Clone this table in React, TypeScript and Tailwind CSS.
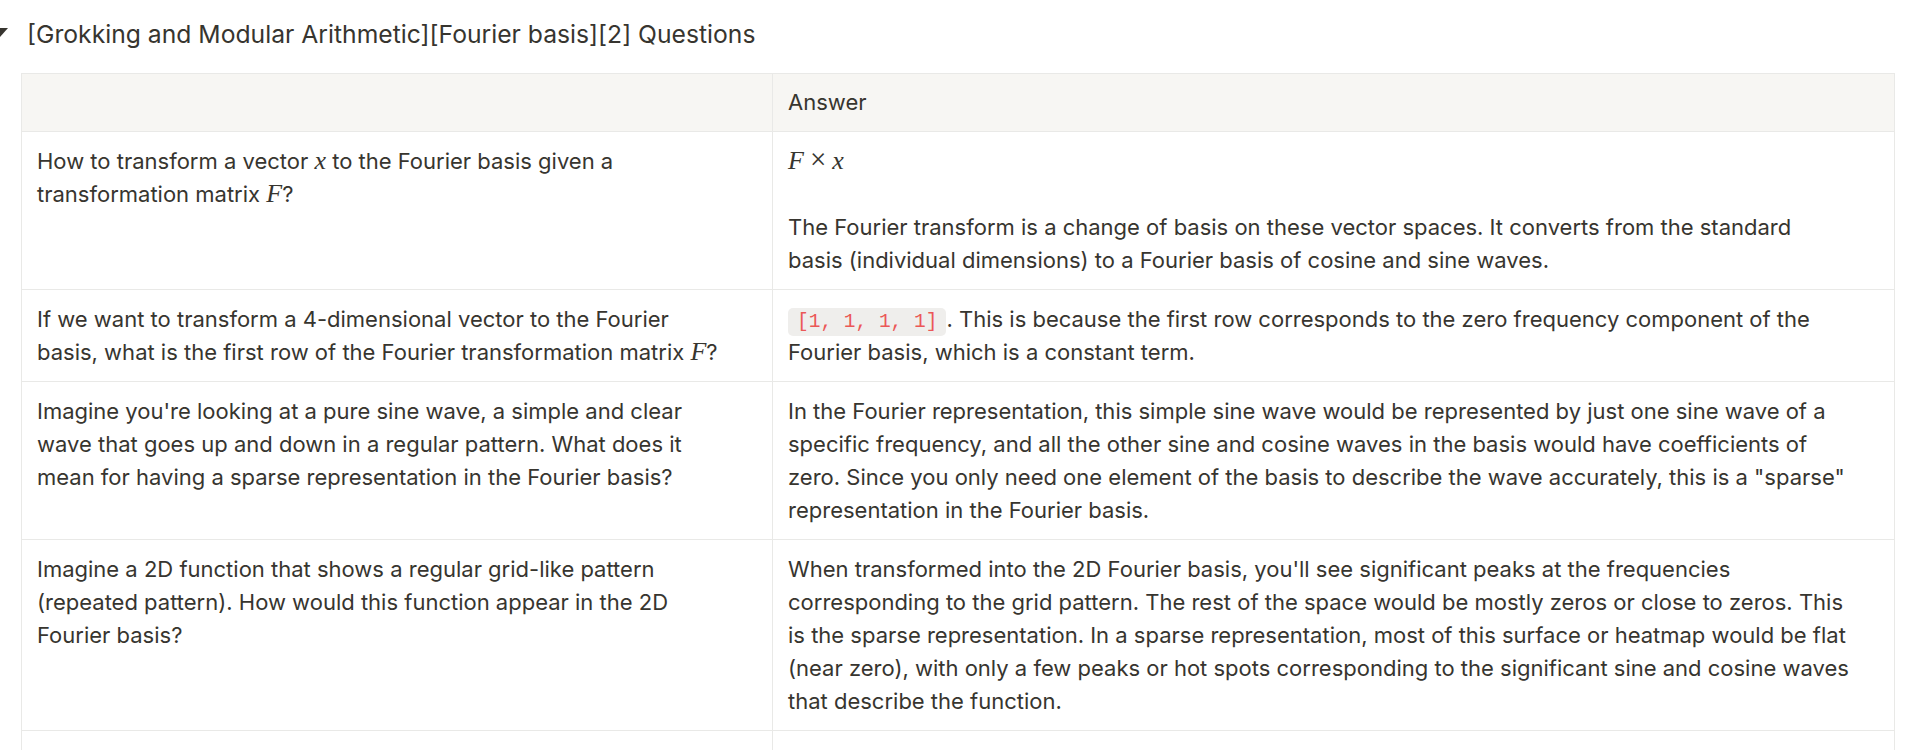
import type { ReactNode } from "react";

const TEXT = "text-[#37352f]";

function M({ children }: { children: ReactNode }) {
  return (
    <span className="font-['Liberation_Serif',serif] text-[26px] italic leading-none">
      {children}
    </span>
  );
}

function Code({ children }: { children: ReactNode }) {
  return (
    <span className="rounded-[5px] bg-[#efeeec] px-[9px] py-[3px] font-['Liberation_Mono',monospace] text-[19.5px] leading-none text-[#eb5757]">
      {children}
    </span>
  );
}

type Row = { q: ReactNode[]; a: ReactNode[] };

const ROWS: Row[] = [
  {
    q: [
      <>
        How to transform a vector <M>x</M> to the Fourier basis given a
      </>,
      <>
        transformation matrix <M>F</M>?
      </>,
    ],
    a: [
      <span className="font-['Liberation_Serif',serif] text-[26px] leading-none">
        <i>F</i>
        <span className="mx-[6px] text-[29px]">×</span>
        <i>x</i>
      </span>,
      <>&nbsp;</>,
      <>
        The Fourier transform is a change of basis on these vector spaces. It
        converts from the standard
      </>,
      <>
        basis (individual dimensions) to a Fourier basis of cosine and sine
        waves.
      </>,
    ],
  },
  {
    q: [
      <>If we want to transform a 4-dimensional vector to the Fourier</>,
      <>
        basis, what is the first row of the Fourier transformation matrix{" "}
        <M>F</M>?
      </>,
    ],
    a: [
      <>
        <Code>[1, 1, 1, 1]</Code>. This is because the first row corresponds to
        the zero frequency component of the
      </>,
      <>Fourier basis, which is a constant term.</>,
    ],
  },
  {
    q: [
      <>Imagine you're looking at a pure sine wave, a simple and clear</>,
      <>wave that goes up and down in a regular pattern. What does it</>,
      <>mean for having a sparse representation in the Fourier basis?</>,
    ],
    a: [
      <>
        In the Fourier representation, this simple sine wave would be
        represented by just one sine wave of a
      </>,
      <>
        specific frequency, and all the other sine and cosine waves in the
        basis would have coefficients of
      </>,
      <>
        zero. Since you only need one element of the basis to describe the wave
        accurately, this is a "sparse"
      </>,
      <>representation in the Fourier basis.</>,
    ],
  },
  {
    q: [
      <>Imagine a 2D function that shows a regular grid-like pattern</>,
      <>(repeated pattern). How would this function appear in the 2D</>,
      <>Fourier basis?</>,
    ],
    a: [
      <>
        When transformed into the 2D Fourier basis, you'll see significant
        peaks at the frequencies
      </>,
      <>
        corresponding to the grid pattern. The rest of the space would be
        mostly zeros or close to zeros. This
      </>,
      <>
        is the sparse representation. In a sparse representation, most of this
        surface or heatmap would be flat
      </>,
      <>
        (near zero), with only a few peaks or hot spots corresponding to the
        significant sine and cosine waves
      </>,
      <>that describe the function.</>,
    ],
  },
];

function Lines({ lines }: { lines: ReactNode[] }) {
  return (
    <>
      {lines.map((l, i) => (
        <div key={i} className="h-[33px] whitespace-nowrap">
          {l}
        </div>
      ))}
    </>
  );
}

export default function App() {
  return (
    <div
      className={`h-[750px] overflow-hidden bg-white font-['Inter',sans-serif] ${TEXT}`}
    >
      {/* toggle heading */}
      <div className="flex h-[73px] items-start pt-[17px]">
        <svg
          width="9"
          height="10"
          viewBox="0 0 9 10"
          className="mt-[11px] shrink-0 fill-[#37352f]"
          aria-hidden
        >
          <polygon points="0,0 8,0 0,9" />
        </svg>
        <h3 className="ml-[18px] text-[24.7px] leading-[35px]">
          [Grokking and Modular Arithmetic][Fourier basis][2] Questions
        </h3>
      </div>

      {/* table */}
      <table className="ml-[21px] w-[1873px] table-fixed border-collapse text-[22px] leading-[33px]">
        <colgroup>
          <col className="w-[751px]" />
          <col className="w-[1122px]" />
        </colgroup>
        <thead>
          <tr className="bg-[#f7f6f3]">
            <th className="h-[58px] border border-[#e9e9e7] px-[15px] text-left font-normal"></th>
            <th className="h-[58px] border border-[#e9e9e7] px-[15px] text-left font-normal">
              Answer
            </th>
          </tr>
        </thead>
        <tbody>
          {ROWS.map((r, i) => (
            <tr key={i}>
              <td className="border border-[#e9e9e7] px-[15px] pt-[13px] pb-[12px] align-top">
                <Lines lines={r.q} />
              </td>
              <td className="border border-[#e9e9e7] px-[15px] pt-[13px] pb-[12px] align-top">
                <Lines lines={r.a} />
              </td>
            </tr>
          ))}
          <tr>
            <td className="h-[120px] border border-[#e9e9e7]"></td>
            <td className="h-[120px] border border-[#e9e9e7]"></td>
          </tr>
        </tbody>
      </table>
    </div>
  );
}
